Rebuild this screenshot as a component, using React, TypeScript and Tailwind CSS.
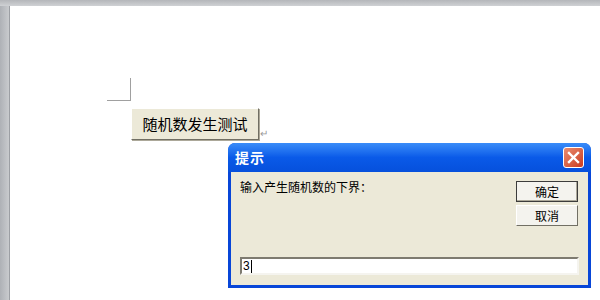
export default function App() {
  const font = { fontFamily: "'SimSun', 'Noto Sans CJK SC', sans-serif" };

  return (
    <div className="relative w-[600px] h-[300px] overflow-hidden bg-white" style={font}>
      {/* window chrome: top and left gray strips */}
      <div className="flex flex-col h-full">
        <div className="h-[6px] bg-gradient-to-b from-[#b4b6ba] to-[#cfd1d4]" />
        <div className="flex flex-1">
          <div className="w-[10px] bg-gradient-to-r from-[#aeb1b6] to-[#c9cbce] border-r border-[#9c9fa4]" />
          <div className="flex-1 bg-white pl-[97px] pt-[72px]">
            {/* margin corner mark */}
            <div className="w-[24px] h-[23px] border-r border-b border-[#a0a0a0]" />
            <div className="flex items-end pl-[24px] pt-[7px]">
              <button className="w-[128px] h-[32px] bg-[#ece9d8] border border-t-white border-l-white border-r-[#716f64] border-b-[#716f64] shadow-[1px_1px_0_#aca899] text-[15px] text-black">
                随机数发生测试
              </button>
              <span className="text-[10px] leading-none text-[#9a9a9a] ml-[1px] mb-[2px]">↵</span>
            </div>
          </div>
        </div>
      </div>

      {/* dialog */}
      <div className="absolute left-[228px] top-[143px] w-[363px] h-[145px] rounded-t-[7px] bg-[#0846d8] p-[3px] pt-0 flex flex-col">
        <div className="h-[29px] -mx-[3px] rounded-t-[7px] bg-gradient-to-b from-[#3a8cf8] via-[#0a5ae8] to-[#0650dc] flex items-center justify-between px-[7px]">
          <span className="text-white font-bold text-[14px] tracking-[1px]">提示</span>
          <div className="w-[21px] h-[21px] rounded-[3px] border border-white bg-gradient-to-br from-[#e98b6f] to-[#c9381c] flex items-center justify-center">
            <svg width="13" height="13" viewBox="0 0 13 13">
              <path d="M2 2 L11 11 M11 2 L2 11" stroke="white" strokeWidth="2.4" strokeLinecap="square" />
            </svg>
          </div>
        </div>
        <div className="flex-1 bg-[#ece9d8] flex flex-col px-[9px] pt-[9px] pb-[10px]">
          <div className="flex justify-between">
            <span className="text-[12px] text-black -mt-[3px]">输入产生随机数的下界：</span>
            <div className="flex flex-col gap-[3px] mr-[1px]">
              <button className="w-[62px] h-[21px] bg-[#f4f3ee] border border-[#3c3c3c] shadow-[inset_-1px_-1px_0_#aca899] text-[12px] text-black">
                确定
              </button>
              <button className="w-[62px] h-[21px] bg-[#f4f3ee] border border-t-white border-l-white border-r-[#716f64] border-b-[#716f64] text-[12px] text-black">
                取消
              </button>
            </div>
          </div>
          <div className="mt-auto h-[18px] bg-white border-2 border-t-[#7e7b70] border-l-[#7e7b70] border-r-[#f5f4ef] border-b-[#f5f4ef] flex items-center pl-[1px]">
            <span className="text-[12px] text-black" style={{ fontFamily: "'Liberation Sans', sans-serif" }}>3</span>
            <span className="w-[1px] h-[13px] bg-black ml-[1px]" />
          </div>
        </div>
      </div>
    </div>
  );
}
